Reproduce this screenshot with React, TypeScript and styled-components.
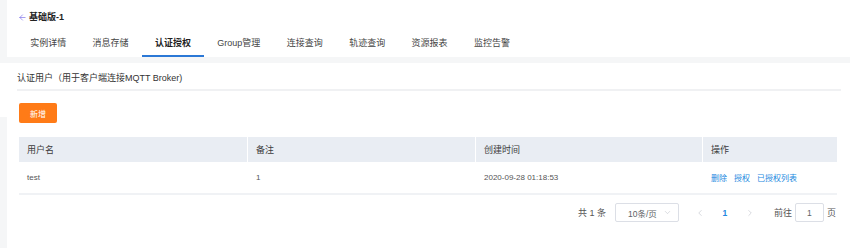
import styled, { createGlobalStyle } from "styled-components";
import { ArrowLeft, ChevronDown, ChevronLeft, ChevronRight } from "lucide-react";

const GlobalStyle = createGlobalStyle`
  html, body {
    margin: 0;
    padding: 0;
    background: #f5f6f7;
    font-family: "Liberation Sans", "Noto Sans CJK SC", sans-serif;
    color: #333;
  }
`;

type Tab = { label: string; active?: boolean };

const tabs: Tab[] = [
  { label: "实例详情" },
  { label: "消息存储" },
  { label: "认证授权", active: true },
  { label: "Group管理" },
  { label: "连接查询" },
  { label: "轨迹查询" },
  { label: "资源报表" },
  { label: "监控告警" },
];

const columns = ["用户名", "备注", "创建时间", "操作"];
const widths = [228, 228, 227, 135];

const App = () => {
  return (
    <>
      <GlobalStyle />
      <Page>
        <SideEdge>
          <SideBlock />
        </SideEdge>
        <Main>
          <Header>
            <TitleRow>
              <ArrowLeft size={9} color="#6b5ce7" strokeWidth={1.6} />
              <Title>基础版-1</Title>
            </TitleRow>
            <Tabs>
              {tabs.map((t) => (
                <TabItem key={t.label} $active={t.active}>
                  {t.label}
                </TabItem>
              ))}
            </Tabs>
          </Header>

          <Card>
            <CardTitle>认证用户（用于客户端连接MQTT Broker)</CardTitle>
            <AddButton>新增</AddButton>

            <Table>
              <HeadRow>
                {columns.map((c, i) => (
                  <HeadCell key={c} style={{ width: widths[i] }}>
                    {c}
                  </HeadCell>
                ))}
              </HeadRow>
              <BodyRow>
                <BodyCell style={{ width: widths[0] }}>test</BodyCell>
                <BodyCell style={{ width: widths[1] }}>1</BodyCell>
                <BodyCell style={{ width: widths[2] }}>2020-09-28 01:18:53</BodyCell>
                <BodyCell style={{ width: widths[3] }}>
                  <Action>删除</Action>
                  <Action>授权</Action>
                  <Action>已授权列表</Action>
                </BodyCell>
              </BodyRow>
            </Table>

            <Pagination>
              <Total>共 1 条</Total>
              <SizeSelect>
                <span>10条/页</span>
                <ChevronDown size={9} color="#c0c4cc" strokeWidth={1.5} />
              </SizeSelect>
              <PagerArrow $first>
                <ChevronLeft size={10} strokeWidth={1.5} />
              </PagerArrow>
              <PageNum>1</PageNum>
              <PagerArrow>
                <ChevronRight size={10} strokeWidth={1.5} />
              </PagerArrow>
              <Jumper>
                前往
                <JumpInput>1</JumpInput>
                页
              </Jumper>
            </Pagination>
          </Card>
        </Main>
      </Page>
    </>
  );
};

const Page = styled.div`
  display: flex;
  width: 850px;
  height: 248px;
  overflow: hidden;
`;

const SideEdge = styled.div`
  width: 7px;
  flex-shrink: 0;
  background: #f5f6f7;
`;

const SideBlock = styled.div`
  margin-top: 63px;
  height: 54px;
  background: #fff;
`;

const Main = styled.div`
  flex: 1;
  display: flex;
  flex-direction: column;
  gap: 6px;
`;

const Header = styled.div`
  background: #fff;
  height: 57px;
  box-sizing: border-box;
  padding: 10px 0 0 11px;
`;

const TitleRow = styled.div`
  display: flex;
  align-items: center;
  height: 14px;
  gap: 2px;
`;

const Title = styled.span`
  font-size: 9px;
  font-weight: bold;
  color: #222;
  line-height: 14px;
`;

const Tabs = styled.div`
  display: flex;
  margin-top: 12px;
  margin-left: -1px;
`;

const TabItem = styled.div<{ $active?: boolean }>`
  font-size: 9px;
  line-height: 14px;
  padding: 0 13.2px 5px;
  color: ${(p) => (p.$active ? "#1f1f1f" : "#444")};
  font-weight: ${(p) => (p.$active ? "bold" : "normal")};
  border-bottom: 2px solid ${(p) => (p.$active ? "#2b78d6" : "transparent")};
`;

const Card = styled.div`
  flex: 1;
  background: #fff;
  padding: 8px 9px 0 10px;
`;

const CardTitle = styled.div`
  font-size: 9px;
  line-height: 14px;
  color: #333;
  padding-bottom: 4px;
  border-bottom: 2px solid #f0f1f3;
`;

const AddButton = styled.button`
  display: block;
  margin: 12px 0 0 2px;
  width: 38px;
  height: 20px;
  border: none;
  border-radius: 2px;
  background: #ff7b17;
  color: #fff;
  font-family: inherit;
  font-size: 8px;
  padding: 0;
`;

const Table = styled.div`
  margin: 14px 0 0 2px;
  width: 818px;
`;

const HeadRow = styled.div`
  display: flex;
  height: 25px;
  background: #e9edf3;
`;

const HeadCell = styled.div`
  box-sizing: border-box;
  display: flex;
  align-items: center;
  padding-left: 8px;
  font-size: 9px;
  color: #3c3c3c;
  & + & {
    border-left: 1px solid #fff;
  }
`;

const BodyRow = styled.div`
  display: flex;
  height: 31px;
  border-bottom: 2px solid #f0f2f5;
`;

const BodyCell = styled.div`
  box-sizing: border-box;
  display: flex;
  align-items: center;
  gap: 7px;
  padding-left: 8px;
  font-size: 8px;
  color: #555;
  & + & {
    padding-left: 9px;
  }
`;

const Action = styled.span`
  color: #2389e0;
  font-size: 8px;
`;

const Pagination = styled.div`
  display: flex;
  align-items: center;
  justify-content: flex-end;
  width: 818px;
  margin: 8px 0 0 2px;
  font-size: 9px;
  color: #555;
`;

const Total = styled.span`
  margin-right: 9px;
`;

const SizeSelect = styled.div`
  box-sizing: border-box;
  width: 64px;
  height: 19px;
  border: 1px solid #dcdfe6;
  border-radius: 2px;
  display: flex;
  align-items: center;
  justify-content: space-between;
  padding: 0 6px 0 12px;
  color: #606266;
  font-size: 8.5px;
`;

const PagerArrow = styled.span<{ $first?: boolean }>`
  display: flex;
  align-items: center;
  justify-content: center;
  width: 24px;
  color: #c0c4cc;
  margin-left: ${(p) => (p.$first ? "9px" : "0")};
`;

const PageNum = styled.span`
  width: 26px;
  text-align: center;
  color: #2389e0;
  font-weight: bold;
  font-size: 8.5px;
`;

const Jumper = styled.div`
  display: flex;
  align-items: center;
  gap: 3px;
  margin-left: 12px;
  margin-right: 1px;
`;

const JumpInput = styled.div`
  box-sizing: border-box;
  width: 29px;
  height: 19px;
  border: 1px solid #dcdfe6;
  border-radius: 2px;
  display: flex;
  align-items: center;
  justify-content: center;
  color: #606266;
  font-size: 8.5px;
`;

export default App;
